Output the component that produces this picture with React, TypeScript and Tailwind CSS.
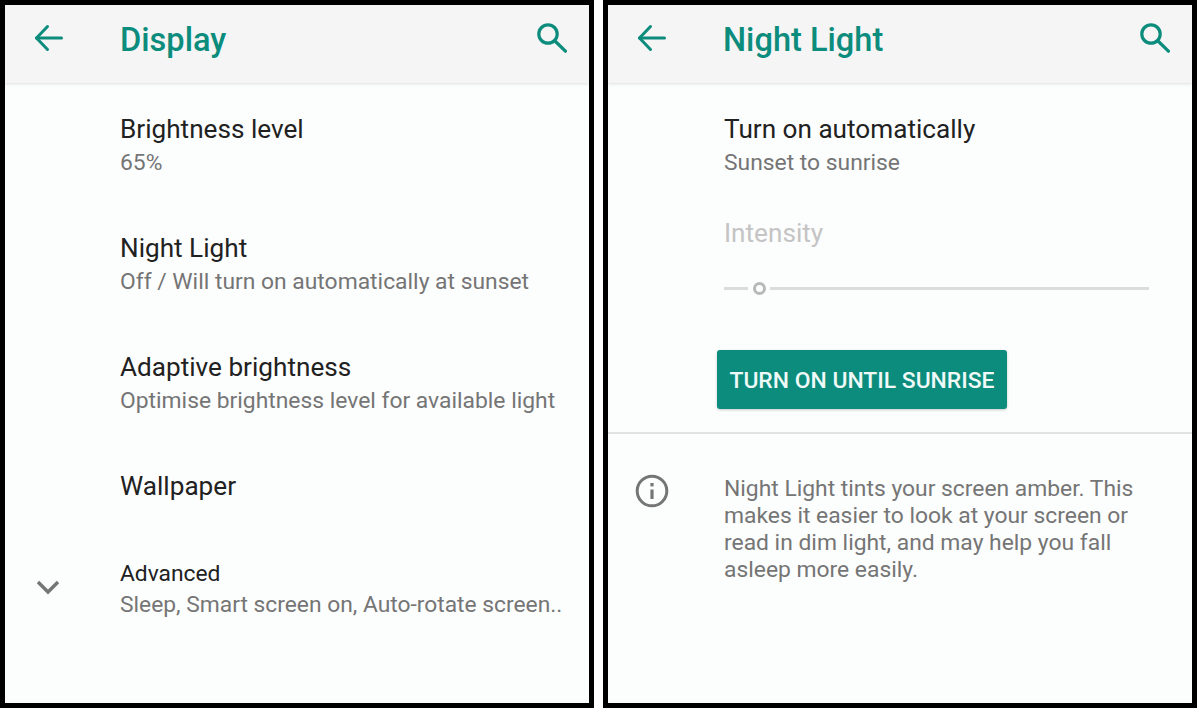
import type { ReactNode } from "react";

const font = { fontFamily: "Roboto, sans-serif" };

function BackIcon() {
  return (
    <svg width="30" height="28" viewBox="0 0 30 28" fill="none" stroke="#0c8c7c" strokeWidth="3" strokeLinecap="round" strokeLinejoin="round">
      <path d="M2.5 14H27.5" />
      <path d="M13.5 2.5 2.5 14 13.5 25.5" />
    </svg>
  );
}

function SearchIcon() {
  return (
    <svg width="30" height="30" viewBox="0 0 30 30" fill="none" stroke="#0c8c7c" strokeWidth="3.2" strokeLinecap="round">
      <circle cx="11" cy="11" r="9.2" />
      <path d="M18 18 28.4 28.2" />
    </svg>
  );
}

function Header({ title }: { title: string }) {
  return (
    <header className="flex h-[78px] shrink-0 items-center justify-between bg-[#f5f5f5] pb-[12px] pl-[29px] pr-[22px] shadow-[0_1px_3px_rgba(0,0,0,0.12)]">
      <div className="flex items-center">
        <BackIcon />
        <h1 className="ml-[56px] mt-[3px] text-[32.6px] font-medium leading-[40px] text-[#0c8c7c]">{title}</h1>
      </div>
      <SearchIcon />
    </header>
  );
}

function SettingRow({ title, subtitle }: { title: string; subtitle?: string }) {
  return (
    <div className="h-[119px] shrink-0 pl-[115px]">
      <div className="h-[35px] whitespace-nowrap text-[26.15px] leading-[34px] text-[#212121]">{title}</div>
      {subtitle && <div className="whitespace-nowrap text-[22.85px] leading-[32px] text-[#757575]">{subtitle}</div>}
    </div>
  );
}

function Panel({ children }: { children: ReactNode }) {
  return (
    <section className="flex h-[708px] w-[594px] flex-col overflow-hidden border-[5px] border-black bg-[#fcfdfd]">
      {children}
    </section>
  );
}

export default function App() {
  return (
    <div style={font} className="flex h-[709px] w-[1197px] justify-between overflow-hidden bg-white">
      <Panel>
        <Header title="Display" />
        <div className="flex flex-col pt-[29px]">
          <SettingRow title="Brightness level" subtitle="65%" />
          <SettingRow title="Night Light" subtitle="Off / Will turn on automatically at sunset" />
          <SettingRow title="Adaptive brightness" subtitle="Optimise brightness level for available light" />
          <div className="h-[87px] shrink-0 whitespace-nowrap pl-[115px] text-[26.15px] leading-[34px] text-[#212121]">Wallpaper</div>
          <div className="flex">
            <div className="w-[115px] shrink-0 pl-[31px] pt-[24px]">
              <svg width="24" height="15" viewBox="0 0 24 15" fill="none" stroke="#757575" strokeWidth="3.4">
                <path d="M2 2 12 12 22 2" />
              </svg>
            </div>
            <div className="pt-[1px]">
              <div className="h-[32px] whitespace-nowrap text-[22.8px] leading-[34px] text-[#212121]">Advanced</div>
              <div className="whitespace-nowrap text-[22.8px] leading-[32px] text-[#757575]">Sleep, Smart screen on, Auto-rotate screen..</div>
            </div>
          </div>
        </div>
      </Panel>
      <Panel>
        <Header title="Night Light" />
        <div className="flex flex-col pl-[116px] pt-[29px]">
          <div className="h-[35px] text-[26.15px] leading-[34px] text-[#212121]">Turn on automatically</div>
          <div className="text-[22.85px] leading-[32px] text-[#757575]">Sunset to sunrise</div>
          <div className="mt-[37px] text-[26.15px] leading-[34px] text-[#c4c4c4]">Intensity</div>
          <div className="mt-[32px] flex w-[425px] items-center">
            <div className="h-[3px] w-[24px] bg-[#dcdcdc]" />
            <div className="ml-[5px] h-[13px] w-[13px] rounded-full border-[3.5px] border-[#b8b8b8]" />
            <div className="ml-[4px] h-[3px] flex-1 bg-[#dcdcdc]" />
          </div>
          <button className="-ml-[7px] mt-[55px] h-[59px] w-[290px] rounded-[3px] bg-[#0c8c7c] pt-[3px] text-[22.9px] font-medium text-[#effaf8] shadow-[0_1px_3px_rgba(0,0,0,0.2)]">
            TURN ON UNTIL SUNRISE
          </button>
        </div>
        <div className="mt-[23px] h-[2px] shrink-0 bg-[#e2e2e2]" />
        <div className="flex pt-[41px]">
          <div className="-mt-[1px] w-[116px] shrink-0 pl-[27px]">
            <svg width="34" height="34" viewBox="0 0 34 34" fill="none" stroke="#757575">
              <circle cx="17" cy="17" r="14.8" strokeWidth="3" />
              <path d="M17 15.5V25" strokeWidth="3.2" />
              <path d="M17 9v3.4" strokeWidth="3.2" />
            </svg>
          </div>
          <p className="w-[430px] text-[22.85px] leading-[27px] text-[#757575]">
            Night Light tints your screen amber. This makes it easier to look at your screen or read in dim light, and may help you fall asleep more easily.
          </p>
        </div>
      </Panel>
    </div>
  );
}
